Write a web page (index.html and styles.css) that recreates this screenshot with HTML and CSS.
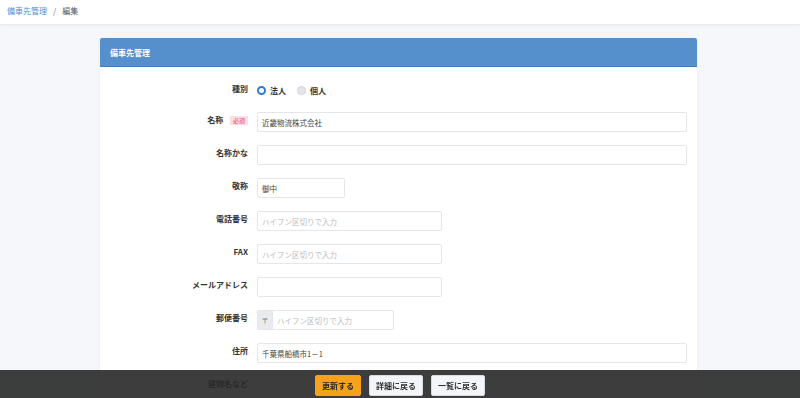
FILE: index.html
```html
<!DOCTYPE html>
<html lang="ja">
<head>
    <meta charset="UTF-8">
    <title>備車先管理 / 編集</title>
    <link rel="stylesheet" href="styles.css">
</head>
<body>
    <div class="topbar">
        <a class="crumb-link" href="#">備車先管理</a>
        <span class="crumb-sep">/</span>
        <span class="crumb-current">編集</span>
    </div>

    <div class="page">
        <div class="card">
            <div class="card-header">備車先管理</div>
            <div class="card-body">
                <div class="row">
                    <div class="label">種別</div>
                    <div class="field radios">
                        <label class="radio"><span class="dot checked"></span>法人</label>
                        <label class="radio"><span class="dot"></span>個人</label>
                    </div>
                </div>
                <div class="row">
                    <div class="label">名称 <span class="badge">必須</span></div>
                    <div class="field"><input class="input full" type="text" value="近畿物流株式会社"></div>
                </div>
                <div class="row">
                    <div class="label">名称かな</div>
                    <div class="field"><input class="input full" type="text"></div>
                </div>
                <div class="row">
                    <div class="label">敬称</div>
                    <div class="field"><input class="input short" type="text" value="御中"></div>
                </div>
                <div class="row">
                    <div class="label">電話番号</div>
                    <div class="field"><input class="input mid" type="text" placeholder="ハイフン区切りで入力"></div>
                </div>
                <div class="row">
                    <div class="label">FAX</div>
                    <div class="field"><input class="input mid" type="text" placeholder="ハイフン区切りで入力"></div>
                </div>
                <div class="row">
                    <div class="label">メールアドレス</div>
                    <div class="field"><input class="input mid" type="text"></div>
                </div>
                <div class="row">
                    <div class="label">郵便番号</div>
                    <div class="field">
                        <div class="input-group">
                            <span class="addon">〒</span>
                            <input class="input zip" type="text" placeholder="ハイフン区切りで入力">
                        </div>
                    </div>
                </div>
                <div class="row">
                    <div class="label">住所</div>
                    <div class="field"><input class="input full" type="text" value="千葉県船橋市1－1"></div>
                </div>
                <div class="row">
                    <div class="label">建物名など</div>
                    <div class="field"><input class="input full" type="text"></div>
                </div>
            </div>
        </div>
    </div>

    <div class="footer">
        <button class="btn btn-primary">更新する</button>
        <button class="btn">詳細に戻る</button>
        <button class="btn">一覧に戻る</button>
    </div>
</body>
</html>
```

FILE: styles.css
```css
body {
    margin: 0;
    background: #f6f7fb;
    font-family: "Noto Sans CJK JP", "Noto Sans", sans-serif;
    font-size: 8px;
    color: #333;
    overflow: hidden;
}
.topbar {
    height: 25px;
    background: #fff;
    border-bottom: 1px solid #e8eaef;
    box-shadow: 0 1px 3px rgba(0, 0, 0, 0.04);
    display: flex;
    align-items: center;
    gap: 6px;
    padding: 0 7px 3px;
    box-sizing: border-box;
}
.crumb-link {
    color: #4b8fd6;
    text-decoration: none;
}
.crumb-sep {
    color: #777;
}
.crumb-current {
    color: #555;
}
.page {
    padding: 13px 103px 0 100px;
}
.card {
    background: #fff;
    border-radius: 2px;
    box-shadow: 0 0 2px rgba(0, 0, 0, 0.08);
}
.card-header {
    height: 29px;
    background: #5690cc;
    border-bottom: 1px solid #3f7ec0;
    border-radius: 2px 2px 0 0;
    color: #fff;
    font-weight: bold;
    padding: 9px 10px 0;
    box-sizing: border-box;
}
.card-body {
    padding: 14px 10px 20px 0;
}
.row {
    display: flex;
    align-items: flex-start;
    gap: 9px;
    margin-bottom: 13px;
}
.label {
    width: 148px;
    flex: none;
    text-align: right;
    font-weight: bold;
    line-height: 12px;
    padding-top: 2px;
    color: #333;
}
.badge {
    display: inline-block;
    margin-left: 5px;
    padding: 0 3px;
    font-size: 6px;
    line-height: 9px;
    background: #fcdde3;
    color: #e2445b;
    border-radius: 1px;
    font-weight: normal;
    vertical-align: 0;
}
.field {
    flex: 1;
}
.radios {
    display: flex;
    align-items: center;
    gap: 11px;
    height: 18px;
}
.radio {
    display: flex;
    align-items: center;
    gap: 4px;
    font-weight: bold;
}
.dot {
    width: 9px;
    height: 9px;
    border-radius: 50%;
    box-sizing: border-box;
    background: #e4e6ea;
    border: 1px solid #cfd3d9;
}
.dot.checked {
    background: #fff;
    border: 2.5px solid #2f7bd0;
}
.input {
    display: block;
    height: 20px;
    box-sizing: border-box;
    border: 1px solid #e3e6ea;
    border-radius: 2px;
    padding: 0 4px;
    font-family: inherit;
    font-size: 7.5px;
    color: #444;
    background: #fff;
}
.input::placeholder {
    color: #bbb;
}
.full {
    width: 430px;
}
.short {
    width: 88px;
}
.mid {
    width: 185px;
}
.input-group {
    display: flex;
    width: 137px;
}
.addon {
    width: 15px;
    height: 20px;
    background: #e9ecef;
    color: #777;
    border: 1px solid #e3e6ea;
    border-right: none;
    border-radius: 2px 0 0 2px;
    box-sizing: border-box;
    display: flex;
    align-items: center;
    justify-content: center;
    font-size: 7px;
}
.zip {
    flex: 1;
    border-radius: 0 2px 2px 0;
}
.footer {
    position: fixed;
    left: 0;
    right: 0;
    bottom: 0;
    height: 28px;
    background: rgba(40, 40, 40, 0.9);
    display: flex;
    justify-content: center;
    align-items: center;
    gap: 8px;
    padding-top: 2px;
    box-sizing: border-box;
}
.btn {
    height: 21px;
    padding: 0 6px;
    font-family: inherit;
    font-size: 8px;
    font-weight: bold;
    color: #333;
    background: #f3f5f8;
    border: 1px solid #d8dce2;
    border-radius: 2px;
    cursor: pointer;
}
.btn-primary {
    background: #f7a21b;
    border-color: #f7a21b;
    color: #2a2a2a;
}
```
